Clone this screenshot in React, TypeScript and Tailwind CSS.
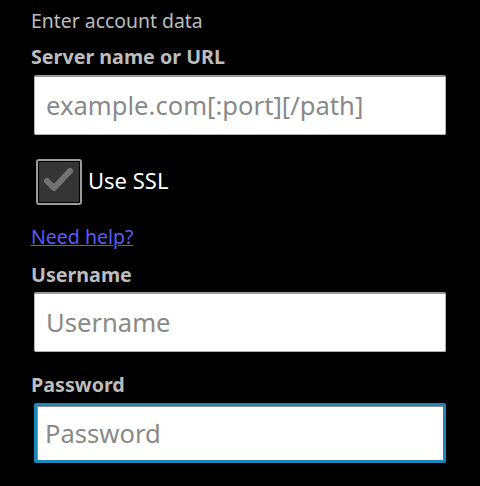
import React from 'react';

const font = { fontFamily: '"Noto Sans", "Open Sans", sans-serif' };

const Field: React.FC<{ placeholder: string; focused?: boolean; type?: string }> = ({ placeholder, focused, type }) => (
  <input
    type={type || 'text'}
    placeholder={placeholder}
    className={
      'block ml-[34px] w-[412px] h-[60px] bg-white rounded-[2px] text-[25.6px] text-black placeholder:text-[#898989] outline-none ' +
      (focused
        ? 'border-[3px] border-[#1d87ba] pl-[8px] shadow-[inset_1px_1px_0_#8c8c8c]'
        : 'border border-[#b4b4b4] border-t-[#9a9a9a] border-t-2 pl-[11px]')
    }
    style={font}
  />
);

export default function App() {
  return (
    <div className="w-[480px] h-[486px] bg-black overflow-hidden" style={font}>
      <div className="pt-[9px]">
        <div className="pl-[31px] text-[19.4px] leading-[24px] text-[#bdbdbd]">Enter account data</div>

        <div className="mt-[12px] pl-[31px] text-[19.7px] leading-[24px] font-bold text-[#bdbdbd]">Server name or URL</div>
        <div className="mt-[6px]">
          <Field placeholder="example.com[:port][/path]" />
        </div>

        {/* SSL checkbox */}
        <div className="mt-[24px] ml-[36px] flex items-center h-[46px]">
          <div className="w-[46px] h-[46px] rounded-[3px] border-2 border-[#9c9c9c] bg-black p-[1px]">
            <div className="w-full h-full bg-[#353535] rounded-[1px] relative">
              <svg width="40" height="40" viewBox="0 0 40 40" className="absolute left-0 top-0">
                <polyline points="8,19 15,26 31,9" fill="none" stroke="#727272" strokeWidth="6" strokeLinecap="round" strokeLinejoin="round" />
              </svg>
            </div>
          </div>
          <span className="ml-[6px] pb-[4px] text-[22px] leading-[28px] text-white">Use SSL</span>
        </div>

        <div className="mt-[20px] pl-[31px] text-[19.5px] leading-[24px]">
          <a href="#" className="text-[#5a5af2] underline">Need help?</a>
        </div>

        <div className="mt-[14px] pl-[31px] text-[19.7px] leading-[24px] font-bold text-[#bdbdbd]">Username</div>
        <div className="mt-[5px]">
          <Field placeholder="Username" />
        </div>

        <div className="mt-[21px] pl-[31px] text-[19.7px] leading-[24px] font-bold text-[#bdbdbd]">Password</div>
        <div className="mt-[6px]">
          <Field placeholder="Password" type="password" focused />
        </div>
      </div>
    </div>
  );
}
